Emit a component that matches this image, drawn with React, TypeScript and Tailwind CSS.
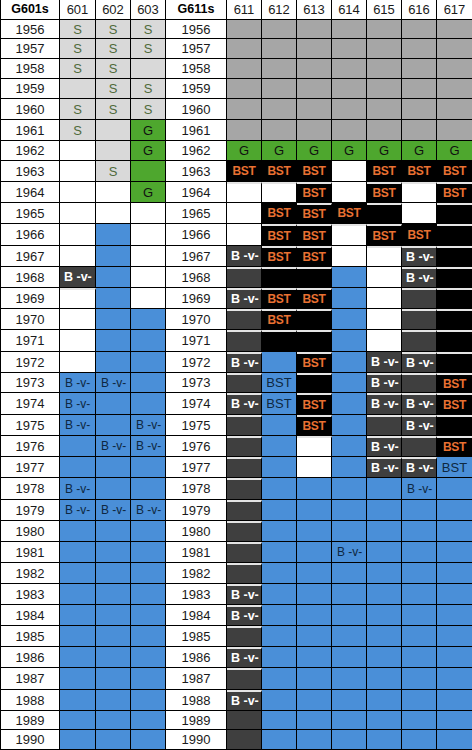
import React from "react";

const rows: [string, string][] = [
  ["1956", "LS LS LS M M M M M M M"],
  ["1957", "LS LS LS M M M M M M M"],
  ["1958", "LS LS L M M M M M M M"],
  ["1959", "L LS LS M M M M M M M"],
  ["1960", "LS LS LS M M M M M M M"],
  ["1961", "LS L G M M M M M M M"],
  ["1962", "W L G G G G G G G G"],
  ["1963", "W LS g KB KB KB W KB KB KB"],
  ["1964", "W W G W W KB W KB W KB"],
  ["1965", "W W W W KB KB KB K W K"],
  ["1966", "W U W W KB KB W KB KB K"],
  ["1967", "W U W DV KB KB W W DV K"],
  ["1968", "DV U W D K K U W DV K"],
  ["1969", "W U W DV KB KB U W D K"],
  ["1970", "W U U D KB K U W D K"],
  ["1971", "W U U D K K U W D K"],
  ["1972", "W U U DV U KB U DV DV K"],
  ["1973", "UV UV U D UB K U DV D KB"],
  ["1974", "UV U U DV UB KB U DV DV KB"],
  ["1975", "UV U UV D U KB U D DV K"],
  ["1976", "U UV UV D U W U DV D KB"],
  ["1977", "U U U D U W U DV DV UB"],
  ["1978", "UV U U D U U U U UV U"],
  ["1979", "UV UV UV D U U U U U U"],
  ["1980", "U U U D U U U U U U"],
  ["1981", "U U U D U U UV U U U"],
  ["1982", "U U U D U U U U U U"],
  ["1983", "U U U DV U U U U U U"],
  ["1984", "U U U DV U U U U U U"],
  ["1985", "U U U D U U U U U U"],
  ["1986", "U U U DV U U U U U U"],
  ["1987", "U U U D U U U U U U"],
  ["1988", "U U U DV U U U U U U"],
  ["1989", "U U U D U U U U U U"],
  ["1990", "U U U D U U U U U U"],
];

const styles: Record<string, { cls: string; text?: string }> = {
  L: { cls: "bg-[#d9d9d9]" },
  LS: { cls: "bg-[#d9d9d9] justify-center text-[#4f6b3c] text-[13px]", text: "S" },
  W: { cls: "bg-white" },
  G: { cls: "bg-[#4ea72e] justify-center text-[#111111] text-[13px]", text: "G" },
  g: { cls: "bg-[#4ea72e]" },
  M: { cls: "bg-[#a6a6a6]" },
  K: { cls: "bg-black" },
  KB: {
    cls: "bg-black justify-center text-[#e97132] font-bold text-[12px] tracking-[-0.4px]",
    text: "BST",
  },
  D: { cls: "bg-[#3f3f3f]" },
  DV: { cls: "bg-[#3f3f3f] pl-[4px] text-white font-bold text-[12.5px]", text: "B -v-" },
  U: { cls: "bg-[#4a8fd8]" },
  UV: { cls: "bg-[#4a8fd8] pl-[5px] text-[#0e2841] text-[12px]", text: "B -v-" },
  UB: { cls: "bg-[#4a8fd8] justify-center text-[#0e2841] text-[13px]", text: "BST" },
};

const isDark = (c: string) => c.startsWith("K") || c.startsWith("D");

const base = "flex items-center border-b border-black whitespace-pre leading-none";

function YearCell({ y, first }: { y: string; first?: boolean }) {
  return (
    <div
      className={
        first
          ? `${base} border-l border-r bg-white justify-center text-[13px] text-[#1a1a1a]`
          : `${base} border-r bg-white justify-center text-[13px] text-[#1a1a1a]`
      }
    >
      {y}
    </div>
  );
}

export default function App() {
  const parsed = rows.map(([y, s]) => [y, s.split(" ")] as [string, string[]]);
  const header = ["601", "602", "603"];
  const header2 = ["611", "612", "613", "614", "615", "616", "617"];

  const renderCell = (code: string, above: string | null, year: string, col: number, last: boolean) => {
    const st = styles[code];
    const light =
      above !== null && isDark(above) && (isDark(code) || code === "W") && Number(year) <= 1988;
    let cls = `${base} ${st.cls}`;
    if (!last) cls += " border-r";
    if (light) cls += " border-t-2 border-t-[#e4e4e4]";
    return (
      <div key={`${year}-${col}`} className={cls}>
        {st.text ?? ""}
      </div>
    );
  };

  return (
    <div className="w-[472px] h-[750px] bg-white overflow-hidden font-['Liberation_Sans',Arial,sans-serif]">
      <div className="grid grid-cols-[60px_36px_35px_35px_61px_35px_35px_35px_35px_35px_35px_35px] grid-rows-[20px_19px_20px_20px_20px_21px_21px_20px_21px_21px_21px_22px_21px_21px_21px_21px_22px_21px_20px_22px_21px_21px_21px_22px_21px_21px_21px_21px_21px_21px_21px_21px_22px_21px_19px_20px]">
        <div className={`${base} border-l border-r bg-white justify-center font-bold text-[12.5px] text-black`}>
          G601s
        </div>
        {header.map((h) => (
          <div key={h} className={`${base} border-r bg-white justify-center text-[13px] text-[#1a1a1a]`}>
            {h}
          </div>
        ))}
        <div className={`${base} border-r bg-white justify-center font-bold text-[12.5px] text-black`}>
          G611s
        </div>
        {header2.map((h, i) => (
          <div
            key={h}
            className={
              i === 6
                ? `${base} bg-white justify-center text-[13px] text-[#1a1a1a]`
                : `${base} border-r bg-white justify-center text-[13px] text-[#1a1a1a]`
            }
          >
            {h}
          </div>
        ))}
        {parsed.map(([y, cells], ri) => {
          const prev = ri > 0 ? parsed[ri - 1][1] : null;
          return (
            <React.Fragment key={y}>
              <YearCell y={y} first />
              {cells.slice(0, 3).map((c, ci) => renderCell(c, prev ? prev[ci] : null, y, ci, false))}
              <YearCell y={y} />
              {cells.slice(3).map((c, ci) =>
                renderCell(c, prev ? prev[ci + 3] : null, y, ci + 3, ci === 6)
              )}
            </React.Fragment>
          );
        })}
      </div>
    </div>
  );
}
